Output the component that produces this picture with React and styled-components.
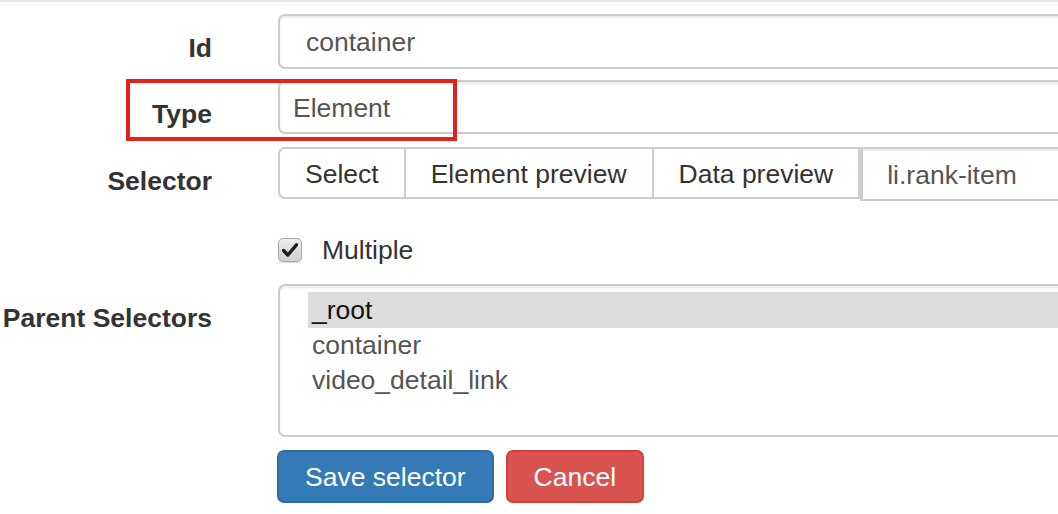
import React from 'react';
import styled, { createGlobalStyle } from 'styled-components';

const GlobalStyle = createGlobalStyle`
	html, body {
		margin: 0;
		padding: 0;
		background: #fff;
		overflow: hidden;
	}
	body {
		font-family: 'Liberation Sans', Arial, Helvetica, sans-serif;
		color: #333;
	}
	* {
		box-sizing: border-box;
	}
`;

const parents = ['_root', 'container', 'video_detail_link'];
const selectorButtons = ['Select', 'Element preview', 'Data preview'];

function App() {
	return (
		<>
			<GlobalStyle />
			<Page>
				<Form>
					<Group $top={0}>
						<Label>Id</Label>
						<TextInput defaultValue='container' readOnly />
					</Group>

					<Group $top={11}>
						<Highlight />
						<Label>Type</Label>
						<TypeSelect defaultValue='Element'>
							<option>Element</option>
						</TypeSelect>
					</Group>

					<Group $top={13}>
						<Label>Selector</Label>
						<InputGroup>
							{selectorButtons.map((text, i) => (
								<GroupButton key={text} $first={i === 0}>
									{text}
								</GroupButton>
							))}
							<GroupInput defaultValue='li.rank-item' readOnly />
						</InputGroup>
					</Group>

					<Group $top={37}>
						<Label />
						<CheckRow>
							<CheckBox>
								<svg width='16' height='14' viewBox='0 0 16 14'>
									<path
										d='M1.5 7.5 L5.8 12 L14.5 1.8'
										fill='none'
										stroke='#1d1d1d'
										strokeWidth='3.4'
										strokeLinecap='round'
										strokeLinejoin='round'
									/>
								</svg>
							</CheckBox>
							<CheckText>Multiple</CheckText>
						</CheckRow>
					</Group>

					<Group $top={22}>
						<Label>Parent Selectors</Label>
						<ListBox>
							{parents.map((p, i) => (
								<ListItem key={p} $selected={i === 0}>
									{p}
								</ListItem>
							))}
						</ListBox>
					</Group>

					<Group $top={13}>
						<Label />
						<Actions>
							<Button $variant='primary'>Save selector</Button>
							<Button $variant='danger'>Cancel</Button>
						</Actions>
					</Group>
				</Form>
			</Page>
		</>
	);
}

export default App;

const Page = styled.div`
	width: 1058px;
	height: 514px;
	border-top: 2px solid #e6e6e6;
	overflow: hidden;
`;

const Form = styled.div`
	display: flex;
	flex-direction: column;
	padding-top: 12px;
`;

const Group = styled.div`
	position: relative;
	display: grid;
	grid-template-columns: 212px 900px;
	column-gap: 66px;
	align-items: start;
	margin-top: ${(p) => p.$top}px;
`;

const Label = styled.label`
	display: block;
	text-align: right;
	font-weight: bold;
	font-size: 26.5px;
	line-height: 37px;
	padding-top: 16px;
	color: #333;
	white-space: nowrap;
`;

const Highlight = styled.div`
	position: absolute;
	left: 126px;
	top: -1px;
	width: 331px;
	height: 62px;
	border: 4px solid #e3231a;
	pointer-events: none;
	z-index: 2;
`;

const TextInput = styled.input`
	display: block;
	width: 100%;
	height: 55px;
	padding: 2px 26px 0;
	font-family: inherit;
	font-size: 26.5px;
	color: #555;
	background: #fff;
	border: 2px solid #ccc;
	border-radius: 7px;
	box-shadow: inset 0 2px 2px rgba(0, 0, 0, 0.075);
	outline: none;
`;

const TypeSelect = styled.select`
	display: block;
	width: 100%;
	height: 54px;
	padding: 2px 13px 0;
	font-family: inherit;
	font-size: 26.5px;
	color: #555;
	background: #fff;
	border: 2px solid #ccc;
	border-radius: 7px;
	box-shadow: inset 0 2px 2px rgba(0, 0, 0, 0.075);
	appearance: none;
	outline: none;
`;

const InputGroup = styled.div`
	display: flex;
	align-items: flex-start;
`;

const GroupButton = styled.button`
	height: 52px;
	padding: 2px 25px 0;
	margin-left: ${(p) => (p.$first ? '0' : '-2px')};
	font-family: inherit;
	font-size: 26.5px;
	color: #333;
	background: #fff;
	border: 2px solid #ccc;
	border-radius: ${(p) => (p.$first ? '7px 0 0 7px' : '0')};
	white-space: nowrap;
	cursor: pointer;
`;

const GroupInput = styled.input`
	flex: 1;
	min-width: 0;
	height: 54px;
	padding: 2px 24px 0;
	font-family: inherit;
	font-size: 26.5px;
	color: #555;
	background: #fff;
	border: 2px solid #ccc;
	border-left-width: 3px;
	border-radius: 0;
	box-shadow: inset 0 2px 2px rgba(0, 0, 0, 0.075);
	outline: none;
`;

const CheckRow = styled.div`
	display: flex;
	align-items: center;
	gap: 20px;
	height: 24px;
`;

const CheckBox = styled.span`
	display: flex;
	align-items: center;
	justify-content: center;
	width: 24px;
	height: 24px;
	border-radius: 5px;
	border: 1px solid #a9a9a9;
	background: linear-gradient(#ececec, #cfcfcf);
	box-shadow: 0 1px 1px rgba(0, 0, 0, 0.15);
`;

const CheckText = styled.span`
	font-size: 26.5px;
	color: #333;
	line-height: 24px;
`;

const ListBox = styled.div`
	height: 153px;
	padding: 6px 0 0 28px;
	border: 2px solid #ccc;
	border-radius: 7px;
	background: #fff;
	box-shadow: inset 0 2px 2px rgba(0, 0, 0, 0.075);
`;

const ListItem = styled.div`
	height: ${(p) => (p.$selected ? '36px' : '35px')};
	line-height: ${(p) => (p.$selected ? '36px' : '35px')};
	padding-left: 4px;
	font-size: 26.5px;
	color: ${(p) => (p.$selected ? '#111' : '#555')};
	background: ${(p) => (p.$selected ? '#dcdcdc' : 'transparent')};
`;

const Actions = styled.div`
	display: flex;
	gap: 12px;
	margin-left: -1px;
`;

const Button = styled.button`
	height: 53px;
	padding: 2px 26px 0;
	font-family: inherit;
	font-size: 26.5px;
	color: #fff;
	border-radius: 7px;
	border: 2px solid
		${(p) => (p.$variant === 'primary' ? '#2e6da4' : '#d43f3a')};
	background: ${(p) => (p.$variant === 'primary' ? '#337ab7' : '#d9534f')};
	cursor: pointer;
	white-space: nowrap;
`;
